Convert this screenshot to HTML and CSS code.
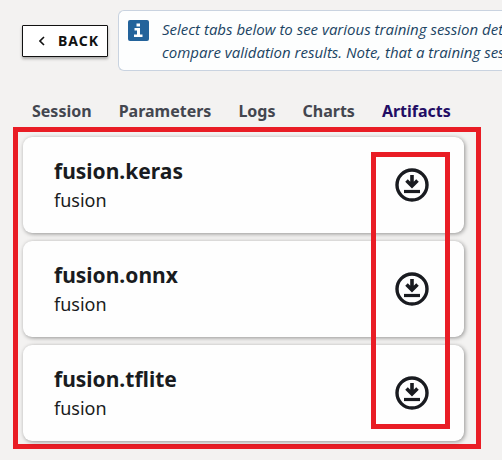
FILE: index.html
```html
<!DOCTYPE html>
<html lang="en">

<head>
    <meta charset="UTF-8">
    <meta name="viewport" content="width=device-width, initial-scale=1.0">
    <title>Training Session - Artifacts</title>
    <link rel="stylesheet" href="styles.css">
</head>

<body>

    <!-- Shared download icon -->
    <svg class="sprite" aria-hidden="true">
        <symbol id="icon-download" viewBox="0 0 34 34">
            <circle cx="17" cy="17" r="15" fill="none" stroke="currentColor" stroke-width="3.4"/>
            <path d="M17 7v10.500M11.500 12.500l5.500 5.500 5.500-5.500" fill="none" stroke="currentColor" stroke-width="3.600"/>
            <path d="M9 23.500h16" stroke="currentColor" stroke-width="3.200"/>
        </symbol>
    </svg>

    <header class="header">
        <button type="button" class="back">
            <svg class="back-icon" viewBox="0 0 6 10" aria-hidden="true">
                <path d="M5 1L1 5l4 4" fill="none" stroke="currentColor" stroke-width="1.600"/>
            </svg>
            Back
        </button>
        <div class="info">
            <svg class="info-icon" viewBox="0 0 21 21" aria-hidden="true">
                <rect width="21" height="21" rx="2" fill="#23639b"/>
                <path d="M8.500 3.500h3.500v3H8.500zM6.500 8H12v6.500h2.500V17H6v-2.500h3v-4H6.500z" fill="#fff"/>
            </svg>
            <p class="info-text">Select tabs below to see various training session details<br>compare validation results. Note, that a training session</p>
        </div>
    </header>

    <nav class="tabs">
        <a href="#session" class="tab">Session</a>
        <a href="#parameters" class="tab">Parameters</a>
        <a href="#logs" class="tab">Logs</a>
        <a href="#charts" class="tab">Charts</a>
        <a href="#artifacts" class="tab active">Artifacts</a>
    </nav>

    <main class="artifacts">
        <div class="card">
            <div>
                <h2 class="card-title">fusion.keras</h2>
                <p class="card-text">fusion</p>
            </div>
            <button type="button" class="download" aria-label="Download fusion.keras">
                <svg class="download-icon"><use href="#icon-download"/></svg>
            </button>
        </div>
        <div class="card">
            <div>
                <h2 class="card-title">fusion.onnx</h2>
                <p class="card-text">fusion</p>
            </div>
            <button type="button" class="download" aria-label="Download fusion.onnx">
                <svg class="download-icon"><use href="#icon-download"/></svg>
            </button>
        </div>
        <div class="card">
            <div>
                <h2 class="card-title">fusion.tflite</h2>
                <p class="card-text">fusion</p>
            </div>
            <button type="button" class="download" aria-label="Download fusion.tflite">
                <svg class="download-icon"><use href="#icon-download"/></svg>
            </button>
        </div>

        <!-- Highlight around the download buttons -->
        <div class="highlight"></div>
    </main>

</body>

</html>
```

FILE: styles.css
```css
* {
    box-sizing: border-box;
}

body {
    margin: 0;
    padding: 10px 0;
    font-family: "Noto Sans", sans-serif;
    background-color: #f3f2f1;
    color: #191b20;
}

h2, p {
    margin: 0;
}

.sprite {
    position: absolute;
    width: 0;
    height: 0;
}

.header {
    display: flex;
    align-items: center;
    gap: 10px;
    padding-left: 22px;
}

.back {
    display: flex;
    flex-shrink: 0;
    align-items: center;
    gap: 13px;
    height: 32px;
    padding: 0 8px 0 16px;
    background-color: #fff;
    border: 1px solid #111;
    border-radius: 1px;
    box-shadow: 0 2px 3px rgba(0, 0, 0, 0.3);
    font-family: inherit;
    font-size: 14px;
    font-weight: 700;
    letter-spacing: 1px;
    text-transform: uppercase;
    color: #111;
    cursor: pointer;
}

.back-icon {
    width: 6px;
    height: 10px;
}

.info {
    display: flex;
    flex: 1;
    gap: 13px;
    min-width: 0;
    padding: 7px 0 6px 9px;
    overflow: hidden;
    background-color: #fdfefe;
    border: 1px solid #c9d3e0;
    border-right: none;
    border-radius: 6px 0 0 6px;
}

.info-icon {
    flex-shrink: 0;
    width: 21px;
    height: 21px;
    margin-top: 2px;
}

.info-text {
    font-family: "Open Sans", sans-serif;
    font-size: 15px;
    font-style: italic;
    line-height: 23px;
    white-space: nowrap;
    color: #1b4463;
}

.tabs {
    display: flex;
    gap: 27px;
    padding: 28px 32px 4px;
}

.tab {
    font-size: 16px;
    font-weight: 700;
    line-height: 24px;
    text-decoration: none;
    color: #43464f;
}

.tab.active {
    color: #220d64;
}

.artifacts {
    position: relative;
    display: flex;
    flex-direction: column;
    gap: 8px;
    margin: 0 21px 0 13px;
    padding: 5px 12px 3px 5px;
    border: 5px solid #e91d25;
}

.card {
    display: flex;
    align-items: center;
    justify-content: space-between;
    min-height: 96px;
    padding: 0 35px 0 31px;
    background-color: #fefefe;
    border-radius: 9px;
    box-shadow: 1px 1px 4px rgba(0, 0, 0, 0.4);
}

.card-title {
    font-size: 21px;
    font-weight: 700;
    line-height: 30px;
}

.card-text {
    font-size: 18px;
    line-height: 28px;
}

.download {
    display: flex;
    padding: 0;
    background: none;
    border: none;
    color: inherit;
    cursor: pointer;
}

.download-icon {
    width: 34px;
    height: 34px;
}

.highlight {
    position: absolute;
    top: 20px;
    right: 26px;
    bottom: 15px;
    width: 79px;
    border: 5px solid #e91d25;
    pointer-events: none;
}
```
